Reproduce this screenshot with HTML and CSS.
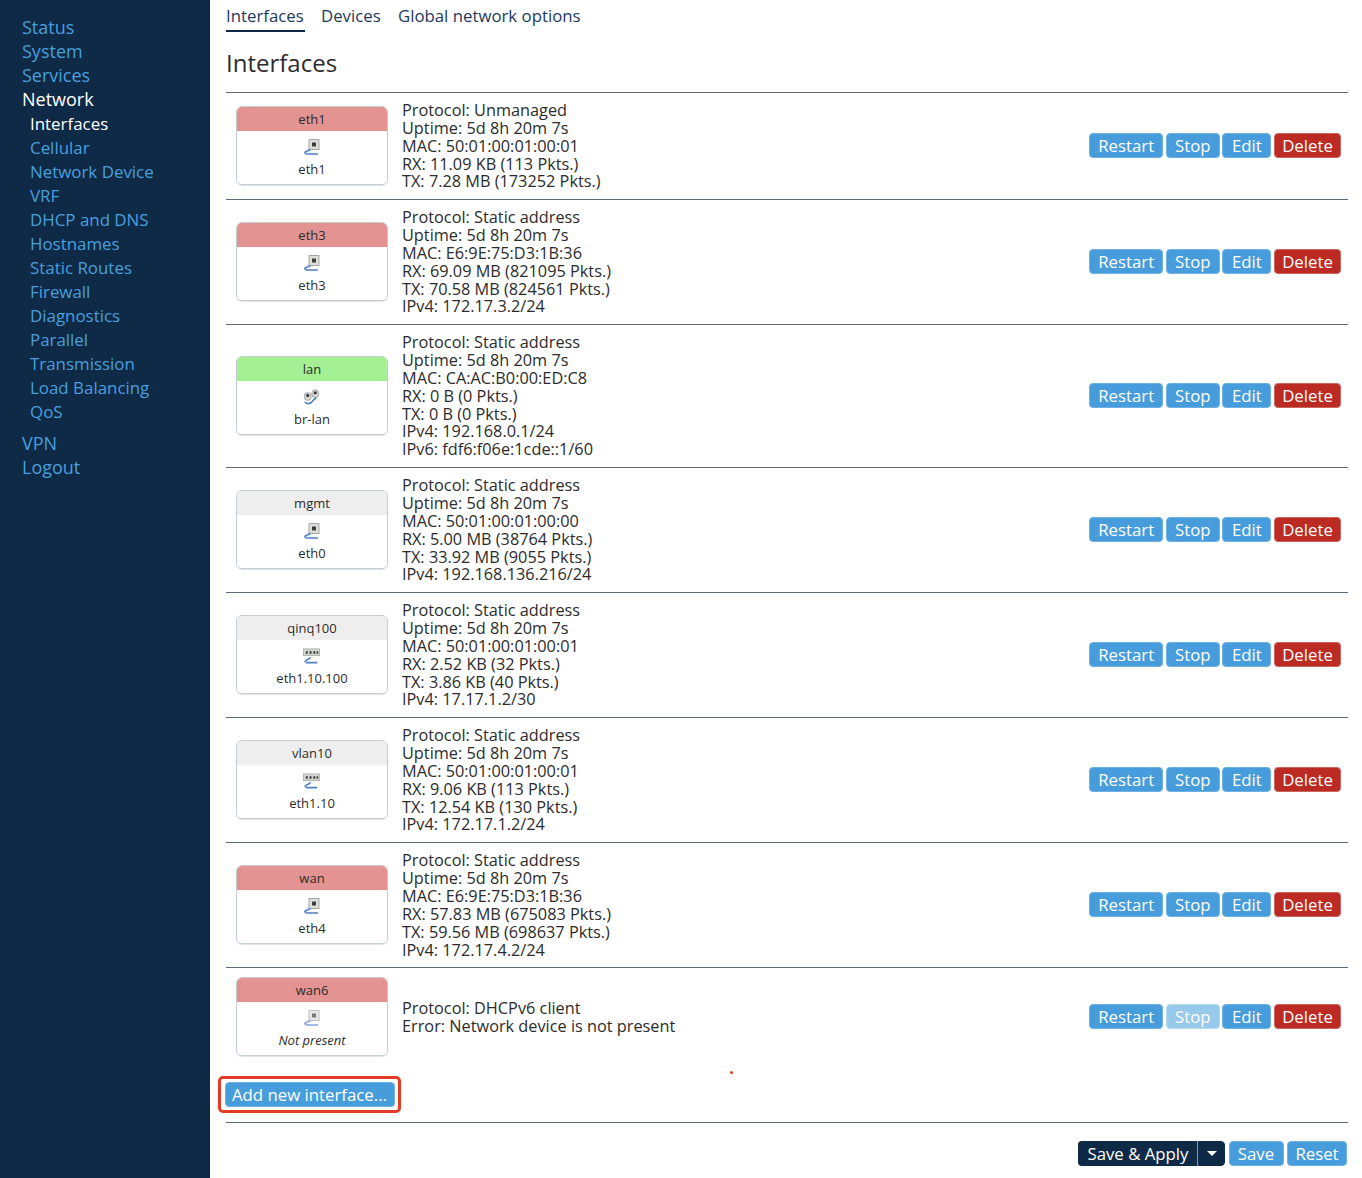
FILE: index.html
```html
<!DOCTYPE html>
<html lang="en">
<head>
<meta charset="utf-8">
<title>Interfaces</title>
<link rel="stylesheet" href="styles.css">
</head>
<body>
<svg class="defs" width="0" height="0" aria-hidden="true">
  <defs>
    <symbol id="i-eth" viewBox="0 0 16 16">
      <rect x="5.500" y="0.500" width="10" height="10" fill="#deded8" stroke="#a3a7aa"/>
      <rect x="8.500" y="3.500" width="4" height="4" fill="#3c3f3c"/>
      <path d="M1 14.500 C2 10.500 5 13 7 10.500 M2 15 H14.500" fill="none" stroke="#4f7fc4" stroke-width="1.700"/>
      <path d="M3 12 L6 9.500" stroke="#9db6dc" stroke-width="1.600"/>
    </symbol>
    <symbol id="i-bridge" viewBox="0 0 18 16">
      <rect x="1.500" y="3.500" width="7" height="8" rx="3" fill="#d4d4d0" stroke="#a0a4a6"/>
      <rect x="9.500" y="0.500" width="7" height="8" rx="3" fill="#d4d4d0" stroke="#a0a4a6"/>
      <circle cx="5" cy="6.500" r="1.600" fill="#333"/>
      <circle cx="13" cy="3.500" r="1.600" fill="#333"/>
      <path d="M2 13 C3 16 8 15.500 10 12.500 C11 11 12 10 14 9" fill="none" stroke="#4f7fc4" stroke-width="1.700"/>
    </symbol>
    <symbol id="i-vlan" viewBox="0 0 18 16">
      <rect x="0.500" y="0.500" width="17" height="7" fill="#d4d4d0" stroke="#b2b5b5"/>
      <path d="M3 3h2v2.500H3zM7 3h2v2.500H7zM11 3h2v2.500h-2zM14.500 3h1.500v2.500h-1.500z" fill="#35383a"/>
      <path d="M2 14.500 C3 10.500 6 13 8 9.500 M3 15 H15" fill="none" stroke="#4f7fc4" stroke-width="1.700"/>
    </symbol>
  </defs>
</svg>
<div class="page">
  <nav class="sidebar">
    <a class="nav-top">Status</a>
    <a class="nav-top">System</a>
    <a class="nav-top">Services</a>
    <a class="nav-top nav-active">Network</a>
    <div class="subnav">
      <a class="nav-sub nav-active">Interfaces</a>
      <a class="nav-sub">Cellular</a>
      <a class="nav-sub">Network Device</a>
      <a class="nav-sub">VRF</a>
      <a class="nav-sub">DHCP and DNS</a>
      <a class="nav-sub">Hostnames</a>
      <a class="nav-sub">Static Routes</a>
      <a class="nav-sub">Firewall</a>
      <a class="nav-sub">Diagnostics</a>
      <a class="nav-sub">Parallel</a>
      <a class="nav-sub">Transmission</a>
      <a class="nav-sub">Load Balancing</a>
      <a class="nav-sub">QoS</a>
    </div>
    <a class="nav-top">VPN</a>
    <a class="nav-top">Logout</a>
  </nav>
  <main class="main">
    <div class="tabs">
      <a class="tab tab-active">Interfaces</a>
      <a class="tab tab-devices">Devices</a>
      <a class="tab tab-global">Global network options</a>
    </div>
    <h2 class="title">Interfaces</h2>
    <div class="table">
      <div class="row">
        <div class="badge"><div class="badge-head head-red">eth1</div><div class="badge-body"><svg class="ico"><use href="#i-eth"/></svg><span>eth1</span></div></div>
        <div class="info">Protocol: Unmanaged<br>Uptime: 5d 8h 20m 7s<br>MAC: 50:01:00:01:00:01<br>RX: 11.09 KB (113 Pkts.)<br>TX: 7.28 MB (173252 Pkts.)</div>
        <div class="actions"><button class="btn">Restart</button><button class="btn">Stop</button><button class="btn">Edit</button><button class="btn btn-del">Delete</button></div>
      </div>
      <div class="row">
        <div class="badge"><div class="badge-head head-red">eth3</div><div class="badge-body"><svg class="ico"><use href="#i-eth"/></svg><span>eth3</span></div></div>
        <div class="info">Protocol: Static address<br>Uptime: 5d 8h 20m 7s<br>MAC: E6:9E:75:D3:1B:36<br>RX: 69.09 MB (821095 Pkts.)<br>TX: 70.58 MB (824561 Pkts.)<br>IPv4: 172.17.3.2/24</div>
        <div class="actions"><button class="btn">Restart</button><button class="btn">Stop</button><button class="btn">Edit</button><button class="btn btn-del">Delete</button></div>
      </div>
      <div class="row">
        <div class="badge"><div class="badge-head head-green">lan</div><div class="badge-body"><svg class="ico"><use href="#i-bridge"/></svg><span>br-lan</span></div></div>
        <div class="info">Protocol: Static address<br>Uptime: 5d 8h 20m 7s<br>MAC: CA:AC:B0:00:ED:C8<br>RX: 0 B (0 Pkts.)<br>TX: 0 B (0 Pkts.)<br>IPv4: 192.168.0.1/24<br>IPv6: fdf6:f06e:1cde::1/60</div>
        <div class="actions"><button class="btn">Restart</button><button class="btn">Stop</button><button class="btn">Edit</button><button class="btn btn-del">Delete</button></div>
      </div>
      <div class="row">
        <div class="badge"><div class="badge-head head-grey">mgmt</div><div class="badge-body"><svg class="ico"><use href="#i-eth"/></svg><span>eth0</span></div></div>
        <div class="info">Protocol: Static address<br>Uptime: 5d 8h 20m 7s<br>MAC: 50:01:00:01:00:00<br>RX: 5.00 MB (38764 Pkts.)<br>TX: 33.92 MB (9055 Pkts.)<br>IPv4: 192.168.136.216/24</div>
        <div class="actions"><button class="btn">Restart</button><button class="btn">Stop</button><button class="btn">Edit</button><button class="btn btn-del">Delete</button></div>
      </div>
      <div class="row">
        <div class="badge"><div class="badge-head head-grey">qinq100</div><div class="badge-body"><svg class="ico"><use href="#i-vlan"/></svg><span>eth1.10.100</span></div></div>
        <div class="info">Protocol: Static address<br>Uptime: 5d 8h 20m 7s<br>MAC: 50:01:00:01:00:01<br>RX: 2.52 KB (32 Pkts.)<br>TX: 3.86 KB (40 Pkts.)<br>IPv4: 17.17.1.2/30</div>
        <div class="actions"><button class="btn">Restart</button><button class="btn">Stop</button><button class="btn">Edit</button><button class="btn btn-del">Delete</button></div>
      </div>
      <div class="row">
        <div class="badge"><div class="badge-head head-grey">vlan10</div><div class="badge-body"><svg class="ico"><use href="#i-vlan"/></svg><span>eth1.10</span></div></div>
        <div class="info">Protocol: Static address<br>Uptime: 5d 8h 20m 7s<br>MAC: 50:01:00:01:00:01<br>RX: 9.06 KB (113 Pkts.)<br>TX: 12.54 KB (130 Pkts.)<br>IPv4: 172.17.1.2/24</div>
        <div class="actions"><button class="btn">Restart</button><button class="btn">Stop</button><button class="btn">Edit</button><button class="btn btn-del">Delete</button></div>
      </div>
      <div class="row">
        <div class="badge"><div class="badge-head head-red">wan</div><div class="badge-body"><svg class="ico"><use href="#i-eth"/></svg><span>eth4</span></div></div>
        <div class="info">Protocol: Static address<br>Uptime: 5d 8h 20m 7s<br>MAC: E6:9E:75:D3:1B:36<br>RX: 57.83 MB (675083 Pkts.)<br>TX: 59.56 MB (698637 Pkts.)<br>IPv4: 172.17.4.2/24</div>
        <div class="actions"><button class="btn">Restart</button><button class="btn">Stop</button><button class="btn">Edit</button><button class="btn btn-del">Delete</button></div>
      </div>
      <div class="row">
        <div class="badge"><div class="badge-head head-red">wan6</div><div class="badge-body"><svg class="ico ico-dim"><use href="#i-eth"/></svg><em>Not present</em></div></div>
        <div class="info">Protocol: DHCPv6 client<br>Error: Network device is not present</div>
        <div class="actions"><button class="btn">Restart</button><button class="btn btn-off">Stop</button><button class="btn">Edit</button><button class="btn btn-del">Delete</button></div>
      </div>
    </div>
    <div class="add-wrap"><button class="btn btn-add">Add new interface...</button></div>
    <span class="dot"></span>
    <div class="footer">
      <div class="split"><button class="btn btn-dark">Save &amp; Apply</button><button class="btn btn-dark btn-caret" aria-label="More"><span class="caret"></span></button></div>
      <button class="btn btn-save">Save</button>
      <button class="btn btn-reset">Reset</button>
    </div>
  </main>
</div>
</body>
</html>
```
FILE: styles.css
```css
* { box-sizing: border-box; }
html, body { margin: 0; height: 1178px; overflow: hidden; }
body { background: #fff; color: #2c2c2c; font-family: "Open Sans", "Noto Sans", sans-serif; font-size: 16.300px; }
.defs { position: absolute; }
.page { display: flex; height: 1178px; }

.sidebar { width: 210px; flex: none; background: #0f2a47; padding: 15px 0 0 22px; display: flex; flex-direction: column; }
.nav-top, .nav-sub { display: block; line-height: 24px; color: #4a9fdc; font-size: 18px; }
.nav-sub { padding-left: 8px; font-size: 16.900px; }
.nav-active { color: #fff; }
.subnav { margin: 1px 0 7px; }

.main { flex: 1; min-width: 0; position: relative; padding: 0 14px 0 16px; }
.tabs { display: flex; height: 32px; }
.tab { height: 32px; line-height: 31px; color: #1c3a5c; font-size: 16.800px; }
.tab-active { width: 79px; border-bottom: 2px solid #0f2a47; }
.tab-devices { margin-left: 16px; width: 60px; }
.tab-global { margin-left: 17px; }
.title { margin: 0; height: 60px; padding-top: 16px; font-size: 24px; line-height: 30px; font-weight: 400; color: #2c2c2c; }

.row { display: flex; align-items: center; border-top: 1px solid #5a6b7f; padding: 8.800px 7px 7.800px 10px; }
.badge { width: 152px; height: 79px; margin-bottom: 2px; flex: none; border: 1px solid #c6ccd4; border-radius: 6px; overflow: hidden; box-shadow: 0 1px 1px #dfe2e6; display: flex; flex-direction: column; font-size: 13px; }
.badge-head { height: 24px; line-height: 24px; text-align: center; flex: none; }
.head-red { background: #e39391; }
.head-green { background: #a5ef95; }
.head-grey { background: #eeeeee; }
.badge-body { flex: 1; display: flex; flex-direction: column; align-items: center; padding-top: 8px; gap: 5px; line-height: 18px; background: #fff; }
.badge-body em { font-style: italic; }
.ico { width: 17px; height: 16px; display: block; margin-left: -1px; }
.ico-dim { opacity: 0.7; }
.info { margin-left: 14px; flex: 1; line-height: 17.900px; color: #2c2c2c; }
.actions { display: flex; gap: 2.700px; flex: none; margin-bottom: 2px; }
.actions .btn:nth-child(1) { width: 74.500px; }
.actions .btn:nth-child(2) { width: 53.500px; }
.actions .btn:nth-child(3) { width: 49px; }
.actions .btn:nth-child(4) { width: 67px; }

.btn { height: 25px; padding: 0; border: 1px solid #6fb1e2; border-radius: 4px; background: #479ddb; color: #fff; font: inherit; font-size: 16.800px; line-height: 22px; }
.btn-del { background: #bb2a23; border-color: #c9655f; }
.btn-off { background: #97c9ea; border-color: #b7daf1; }
.btn-dark { background: #0f2a47; border-color: #0f2a47; }
.btn-save { width: 55px; }
.btn-reset { width: 60px; }

.add-wrap { margin-top: 10.500px; margin-left: -8px; width: 183px; height: 37px; border: 3px solid #e23c26; border-radius: 5px; display: flex; align-items: center; justify-content: center; }
.btn-add { width: 170px; }
.dot { position: absolute; left: 520px; top: 1071px; width: 3px; height: 3px; border-radius: 50%; background: #e23c26; }

.footer { margin-top: 9px; border-top: 1px solid #5a6b7f; padding: 18px 1px 0 0; display: flex; justify-content: flex-end; gap: 3.500px; }
.split { display: flex; }
.split .btn-dark:first-child { border-radius: 4px 0 0 4px; border-right: 1px solid #8a97a6; width: 120px; }
.btn-caret { width: 27px; border-radius: 0 4px 4px 0; display: flex; align-items: center; justify-content: center; }
.caret { width: 0; height: 0; border-left: 5px solid transparent; border-right: 5px solid transparent; border-top: 5px solid #fff; }
```
